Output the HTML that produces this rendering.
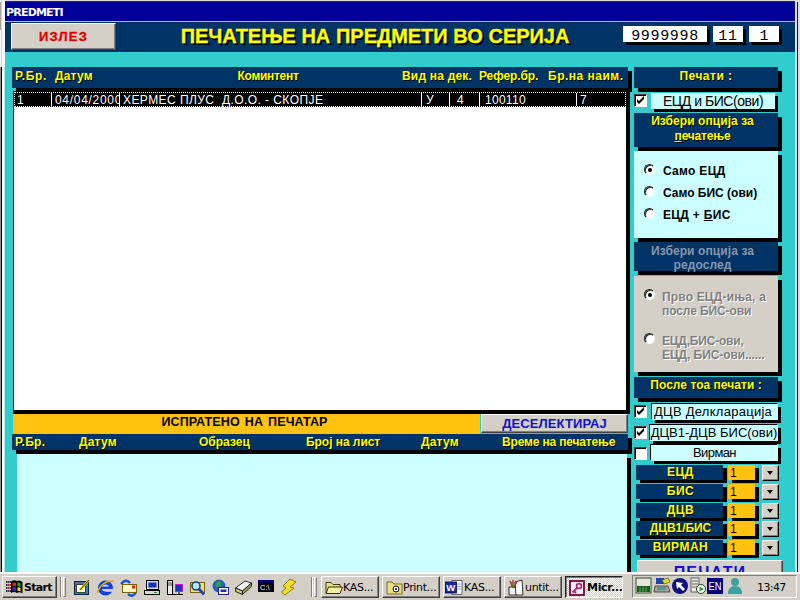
<!DOCTYPE html>
<html><head><meta charset="utf-8">
<style>
*{margin:0;padding:0;box-sizing:border-box}
html,body{width:800px;height:600px;overflow:hidden}
body{position:relative;background:#33cccc;font-family:"Liberation Sans",sans-serif;font-size:11px}
.a{position:absolute}
.navy{background:#003366;box-shadow:4px 4px 0 #000}
.y{color:#ffff00;font-weight:bold;font-size:12px;text-shadow:1px 1px 0 #000;white-space:nowrap;letter-spacing:0.5px}
.c{text-align:center}
.lc{background:#ccffff}
.btn{background:#d4d0c8;border:1px solid;border-color:#fff #404040 #404040 #fff;box-shadow:inset -1px -1px 0 #808080}
.sh{box-shadow:3px 3px 0 #000}
.cb{background:#fff;border:1px solid;border-color:#404040 #fff #fff #404040;box-shadow:inset 1px 1px 0 #000;width:13px;height:13px}
.cb svg{position:absolute;left:-1px;top:-1px}
.rd{width:11px;height:11px;border-radius:50%;background:#fff;border:1px solid;border-color:#202020 #f0f8f8 #f0f8f8 #202020;box-shadow:inset 1px 1px 0 #303030;transform:rotate(0deg)}
.rd i{position:absolute;left:2.5px;top:2.5px;width:4px;height:4px;border-radius:50%;background:#000}
.rt{font-weight:bold;font-size:12px;line-height:14px;color:#000;white-space:nowrap;letter-spacing:0.3px}
.dis{color:#808080;text-shadow:1px 1px 0 #fff}
.lb{font-size:13px;line-height:16px;box-shadow:3px 3px 0 #000,-1px -1px 0 #000;white-space:nowrap}
.cb b{position:absolute;left:1px;top:-2px;font-size:12px;line-height:13px;font-family:"DejaVu Sans",sans-serif}
.sm{width:87px;height:15px;font-size:12px;line-height:14px;padding-left:2px;box-shadow:4px 3px 0 #000}
.or{left:728px;width:27px;height:15px;background:#ffc20e;box-shadow:4px 3px 0 #000;font-size:12px;line-height:16px;padding-left:2px}
.dd{left:762px;width:17px;height:16px;border-color:#fff #000 #000 #fff}
.dd i{position:absolute;left:4px;top:5px;border:3.5px solid transparent;border-top:4px solid #000;border-bottom:0}
.tb{margin-top:1px;font-size:11px;line-height:14px;color:#000;white-space:nowrap;font-family:"DejaVu Sans","Liberation Sans",sans-serif;letter-spacing:-0.3px}
.grip{top:577px;width:3px;height:20px;background:#d4d0c8;border:1px solid;border-color:#fff #808080 #808080 #fff}
.row{color:#fff;font-size:12px;line-height:16px;white-space:nowrap;letter-spacing:0.28px}
.row span{overflow:hidden;height:15px;top:0}
</style></head><body>
<!-- frame -->
<div class="a" style="left:0;top:0;width:800px;height:2px;background:#dcdcd4"></div>
<div class="a" style="left:4px;top:1px;width:794px;height:1px;background:#303030"></div>
<div class="a" style="left:0;top:0;width:5px;height:67px;background:#fafaf8"></div>
<div class="a" style="left:0;top:2px;width:2px;height:28px;background:#a8a49c"></div>
<div class="a" style="left:1px;top:0;width:1px;height:67px;background:#d8d2cc"></div>
<div class="a" style="left:0;top:67px;width:1px;height:533px;background:#909088"></div>
<div class="a" style="left:1px;top:67px;width:1px;height:533px;background:#080808"></div>
<div class="a" style="left:2px;top:67px;width:2px;height:533px;background:#fcfcfc"></div>
<div class="a" style="left:4px;top:67px;width:1px;height:533px;background:#b0ecec"></div>
<div class="a" style="left:795px;top:0;width:5px;height:600px;background:#e0e0d8"></div>
<div class="a" style="left:795px;top:2px;width:2px;height:598px;background:#dce4f0"></div>
<div class="a" style="left:797px;top:2px;width:1px;height:598px;background:#181818"></div>
<!-- title bar -->
<div class="a" style="left:5px;top:2px;width:790px;height:19px;background:#000098"></div>
<div class="a" id="ttl" style="left:6px;top:6px;color:#fff;font-weight:bold;font-size:11px;line-height:13px;letter-spacing:-0.8px;font-family:'DejaVu Sans','Liberation Sans',sans-serif">PREDMETI</div>
<div class="a" style="left:5px;top:21px;width:790px;height:1px;background:#b0b8e0"></div>
<!-- header band -->
<div class="a" style="left:5px;top:22px;width:790px;height:30px;background:#003366"></div>
<div class="a btn c" style="left:11px;top:23px;width:105px;height:27px;color:#e00000;font-weight:bold;font-size:13px;line-height:25px;letter-spacing:1.2px;-webkit-text-stroke:0.3px #e00000" id="izl">ИЗЛЕЗ</div>
<div class="a y c" style="left:150px;top:24px;width:450px;font-size:20px;line-height:24px;text-shadow:2px 2px 0 #000;letter-spacing:-0.05px;word-spacing:0.3px;-webkit-text-stroke:0.3px #ffff00" id="big"><span>ПЕЧАТЕЊЕ НА ПРЕДМЕТИ ВО СЕРИЈА</span></div>
<div class="a sh c" style="left:623px;top:26px;width:84px;height:16px;background:#fff;font:15px/21px 'Liberation Mono',monospace;letter-spacing:0.65px">9999998</div>
<div class="a sh c" style="left:713px;top:26px;width:30px;height:16px;background:#fff;font:15px/21px 'Liberation Mono',monospace;letter-spacing:0.65px">11</div>
<div class="a sh c" style="left:749px;top:26px;width:30px;height:16px;background:#fff;font:15px/21px 'Liberation Mono',monospace">1</div>
<!-- main table header -->
<div class="a navy" style="left:12px;top:67px;width:616px;height:21px"></div>
<div class="a y" style="left:15px;top:69px;letter-spacing:0.65px">Р.Бр.</div>
<div class="a y" style="left:55px;top:69px;letter-spacing:0.2px">Датум</div>
<div class="a y" style="left:237.5px;top:69px;letter-spacing:-0.3px">Коминтент</div>
<div class="a y" style="left:402px;top:69px;letter-spacing:0.2px">Вид на дек.</div>
<div class="a y" style="left:479px;top:69px;letter-spacing:-0.1px">Рефер.бр.</div>
<div class="a y" style="left:548px;top:69px">Бр.на наим.</div>
<!-- list -->
<div class="a" style="left:13px;top:91px;width:617px;height:323px;background:#000"></div>
<div class="a" style="left:14px;top:92px;width:612px;height:318px;background:#fff"></div>
<div class="a" style="left:14px;top:92px;width:612px;height:15px;background:#000;outline:1px dotted #fff;outline-offset:-1px"></div>
<div class="a row" style="left:14px;top:92px;width:612px;height:15px">
<span class="a" style="left:3px;width:34px">1</span>
<span class="a" style="left:41px;width:64px;letter-spacing:0.7px">04/04/2000</span>
<span class="a" style="left:109px;width:290px;letter-spacing:0.43px">ХЕРМЕС ПЛУС&nbsp; Д.О.О. - СКОПЈЕ</span>
<span class="a" style="left:412px;width:20px">У</span>
<span class="a" style="left:443px;width:20px">4</span>
<span class="a" style="left:471px;width:80px">100110</span>
<span class="a" style="left:566px;width:40px">7</span>
<i class="a" style="left:37px;top:1px;width:1px;height:13px;background:#fff"></i>
<i class="a" style="left:105px;top:1px;width:1px;height:13px;background:#fff"></i>
<i class="a" style="left:407px;top:1px;width:1px;height:13px;background:#fff"></i>
<i class="a" style="left:435px;top:1px;width:1px;height:13px;background:#fff"></i>
<i class="a" style="left:465px;top:1px;width:1px;height:13px;background:#fff"></i>
<i class="a" style="left:562px;top:1px;width:1px;height:13px;background:#fff"></i>
</div>
<!-- orange bar -->
<div class="a c" style="left:13px;top:414px;width:467px;height:20px;background:#ffc20e;font-weight:bold;font-size:12.5px;line-height:16px;letter-spacing:0.1px;word-spacing:1.5px;padding-right:4px;color:#000">ИСПРАТЕНО НА ПЕЧАТАР</div>
<div class="a btn c" style="left:481px;top:414px;width:147px;height:19px;color:#1010d0;font-weight:bold;font-size:13px;line-height:17px;letter-spacing:0.1px">ДЕСЕЛЕКТИРАЈ</div>
<!-- second header -->
<div class="a navy" style="left:12px;top:434px;width:616px;height:16px"></div>
<div class="a y" style="left:15px;top:435px;letter-spacing:0.3px">Р.Бр.</div>
<div class="a y" style="left:79px;top:435px;letter-spacing:0.2px">Датум</div>
<div class="a y" style="left:199px;top:435px;letter-spacing:0">Образец</div>
<div class="a y" style="left:306px;top:435px;letter-spacing:-0.05px">Број на лист</div>
<div class="a y" style="left:421px;top:435px;letter-spacing:0.2px">Датум</div>
<div class="a y" style="left:502px;top:435px;letter-spacing:-0.16px">Време на печатење</div>
<div class="a lc" style="left:17px;top:454px;width:610px;height:121px;box-shadow:4px 4px 0 #000"></div>

<!-- right panel -->
<div class="a navy y c" style="left:634px;top:67px;width:144px;height:21px;line-height:18px">Печати :</div>
<div class="a cb" style="left:634px;top:94px"><svg width="13" height="13" viewBox="0 0 13 13"><path d="M3 5 L5 7 L10 2 V5 L5 10 L3 8 Z" fill="#000"/></svg></div>
<div class="a lc sh c" style="left:651px;top:93px;width:124px;height:16px;font-size:14px;line-height:17px;letter-spacing:-0.45px">ЕЦД и БИС(ови)</div>
<div class="a navy y c" style="left:634px;top:113px;width:144px;height:34px;line-height:15px;padding-top:1px;padding-right:7px;letter-spacing:0.07px">Избери опција за<br><span style="letter-spacing:-0.2px"><u>п</u>ечатење</span></div>
<div class="a lc" style="left:634px;top:151px;width:144px;height:87px;box-shadow:4px 4px 0 #000"></div>
<div class="a navy c" style="left:634px;top:242px;width:144px;height:29px;line-height:14px;padding-top:2px;padding-right:7px;font-size:12px;color:#8896ac;font-weight:bold;letter-spacing:0.1px">Избери опција за<br>редослед</div>
<div class="a" style="left:634px;top:276px;width:144px;height:96px;background:#d4d0c8;box-shadow:4px 4px 0 #000"></div>
<div class="a navy y c" style="left:634px;top:377px;width:144px;height:21px;line-height:17px;letter-spacing:0.03px">После тоа печати :</div>

<!-- radios -->
<div class="a rd" style="left:644px;top:164px"><i></i></div>
<div class="a rd" style="left:644px;top:186px"></div>
<div class="a rd" style="left:644px;top:208px"></div>
<div class="a rt" style="left:663px;top:164px">Само ЕЦД</div>
<div class="a rt" style="left:663px;top:186px;letter-spacing:0">Само БИС (ови)</div>
<div class="a rt" style="left:663px;top:208px">ЕЦД + <u>Б</u>ИС</div>
<div class="a rd" style="left:644px;top:289px"><i></i></div>
<div class="a rd" style="left:644px;top:333px"></div>
<div class="a rt dis" style="left:662px;top:290px"><span style="letter-spacing:0.17px">Прво ЕЦД-иња, а</span><br><span style="letter-spacing:-0.1px">после БИС-ови</span></div>
<div class="a rt dis" style="left:662px;top:334px"><span style="letter-spacing:-0.2px">ЕЦД,БИС-ови,</span><br><span style="letter-spacing:-0.08px">ЕЦД, БИС-ови......</span></div>
<!-- check rows -->
<div class="a cb" style="left:634px;top:405px"><svg width="13" height="13" viewBox="0 0 13 13"><path d="M3 5 L5 7 L10 2 V5 L5 10 L3 8 Z" fill="#000"/></svg></div>
<div class="a lc c lb" style="left:652px;top:404px;width:126px;height:16px;letter-spacing:0.27px;padding-right:4px">ДЦВ Делкларација</div>
<div class="a cb" style="left:634px;top:426px"><svg width="13" height="13" viewBox="0 0 13 13"><path d="M3 5 L5 7 L10 2 V5 L5 10 L3 8 Z" fill="#000"/></svg></div>
<div class="a lc c lb" style="left:650px;top:425px;width:128px;height:16px">ДЦВ1-ДЦВ БИС(ови)</div>
<div class="a cb" style="left:634px;top:447px"></div>
<div class="a lc c lb" style="left:651px;top:445px;width:127px;height:16px;letter-spacing:-0.6px">Вирман</div>
<!-- combos -->
<div class="a navy y c sm" style="left:636px;top:465px">ЕЦД</div><div class="a or" style="top:465px">1</div><div class="a btn dd" style="top:465px"><i></i></div>
<div class="a navy y c sm" style="left:636px;top:484px">БИС</div><div class="a or" style="top:484px">1</div><div class="a btn dd" style="top:484px"><i></i></div>
<div class="a navy y c sm" style="left:636px;top:503px">ДЦВ</div><div class="a or" style="top:503px">1</div><div class="a btn dd" style="top:503px"><i></i></div>
<div class="a navy y c sm" style="left:636px;top:521px;letter-spacing:-0.07px">ДЦВ1/БИС</div><div class="a or" style="top:521px">1</div><div class="a btn dd" style="top:521px"><i></i></div>
<div class="a navy y c sm" style="left:636px;top:540px">ВИРМАН</div><div class="a or" style="top:540px">1</div><div class="a btn dd" style="top:540px"><i></i></div>
<div class="a btn c" style="left:637px;top:560px;width:146px;height:24px;color:#1010d0;font-weight:bold;font-size:16px;line-height:23px;letter-spacing:1.2px">ПЕЧАТИ</div>
<!-- taskbar -->
<div class="a" style="left:0;top:572px;width:800px;height:28px;background:#d4d0c8;border-top:1px solid #fff"></div>
<div class="a" style="left:0;top:573px;width:800px;height:1px;background:#fff"></div>
<!-- start -->
<div class="a btn" style="left:2px;top:576px;width:55px;height:22px"></div>
<svg class="a" style="left:6px;top:580px" width="17" height="14" viewBox="0 0 17 14">
<path d="M0 2 H5 M0 5 H5 M0 8 H5 M0 11 H5" stroke="#000" stroke-width="1.6" stroke-dasharray="1.2 0.8"/>
<path d="M1 2 H4" stroke="#2040d0" stroke-width="1.2"/><path d="M1 5 H5" stroke="#e02020" stroke-width="1.4"/><path d="M1 8 H5" stroke="#e02020" stroke-width="1.2"/><path d="M1 11 H4" stroke="#2040d0" stroke-width="1.2"/>
<path d="M5 1.5 Q8 -0.5 11 1 Q13.5 -0.5 16.5 2 L16.5 13.5 Q13.5 11.5 11 13 Q8 11 5 13 Z" fill="#000"/>
<path d="M6.5 3 Q8.5 2 10 3 L10 6.5 Q8.5 5.5 6.5 6.5 Z" fill="#e02020"/>
<path d="M11.5 2.5 Q13 2 14.5 3.5 L14.5 7 Q13 6 11.5 6.5 Z" fill="#20b020"/>
<path d="M6.5 7.5 Q8.5 6.5 10 7.5 L10 11 Q8.5 10 6.5 11 Z" fill="#2030e0"/>
<path d="M11.5 7.5 Q13 7 14.5 8 L14.5 11.5 Q13 10.5 11.5 11 Z" fill="#f0e020"/>
</svg>
<div class="a tb" style="left:24px;top:580px;font-weight:bold;letter-spacing:-0.7px">Start</div>
<div class="a" style="left:60px;top:577px;width:1px;height:20px;background:#808080"></div><div class="a" style="left:61px;top:577px;width:1px;height:20px;background:#fff"></div><div class="a grip" style="left:63px"></div>
<!-- quick launch icons -->
<svg class="a" style="left:70px;top:577px" width="232" height="20" viewBox="0 0 232 20">
<g transform="translate(4,2)"><rect x="0.5" y="2.5" width="14" height="13" fill="#4078b8" stroke="#102040"/><rect x="2.5" y="5.5" width="9" height="8" fill="#fff" stroke="#404040"/><path d="M6 11 L15 1" stroke="#e0c000" stroke-width="2.6"/><path d="M6 11 L15 1" stroke="#000" stroke-width="0.6"/></g>
<g transform="translate(27,2)"><circle cx="8.5" cy="9" r="5.6" fill="none" stroke="#1040e0" stroke-width="4"/><rect x="9" y="9.8" width="8" height="3" fill="#d4d0c8"/><rect x="4" y="7.6" width="11" height="2.4" fill="#1040e0"/><path d="M0 14 Q5 1 17 2" stroke="#e0b000" stroke-width="1.6" fill="none"/></g>
<g transform="translate(50,2)"><path d="M1 5 Q6 -1 10 4 M8 15 Q13 19 16 13" stroke="#2050e0" stroke-width="2.6" fill="none"/><rect x="2.5" y="5.5" width="14" height="8" fill="#fff8c0" stroke="#806000"/><rect x="12" y="6.5" width="3" height="3" fill="#e02020"/></g>
<g transform="translate(74,2)"><rect x="2.5" y="1.5" width="12" height="9" fill="#d8d8d8" stroke="#000"/><rect x="4.5" y="3.5" width="8" height="5" fill="#1030c0"/><rect x="0.5" y="11.5" width="15" height="4" fill="#d8d8d8" stroke="#000"/><rect x="10" y="13" width="3" height="1" fill="#20a020"/></g>
<g transform="translate(96,2)"><rect x="1.5" y="1.5" width="5" height="14" fill="#e8e8e8" stroke="#000"/><path d="M2 4 H6 M2 6 H6" stroke="#000" stroke-width="0.7"/><rect x="9.5" y="5.5" width="7" height="7" fill="#2030c0" stroke="#c020c0"/><path d="M7 15.5 H17 M13 13 V15" stroke="#000"/></g>
<g transform="translate(119,2)"><rect x="1.5" y="3.5" width="14" height="10" fill="#f0e080" stroke="#806000"/><circle cx="7" cy="7" r="4" fill="#b0e8f8" stroke="#204080" stroke-width="1.6"/><path d="M10 10 L15 15.5" stroke="#2040c0" stroke-width="2.8"/></g>
<g transform="translate(142,2)"><circle cx="7" cy="7" r="6.5" fill="#2060c0"/><path d="M3 5 Q7 0 10 4 Q9 9 4 8 Z" fill="#30a040"/><rect x="6.5" y="8.5" width="10" height="7" fill="#fff" stroke="#202080"/><rect x="8.5" y="10.5" width="6" height="2.5" fill="#2030a0"/></g>
<g transform="translate(165,2)"><path d="M0.5 9 L10 2 L16.5 4 L7.5 12 Z" fill="#f4f4f4" stroke="#000" stroke-width="0.8"/><path d="M0.5 9 L7.5 12 L7.5 15.5 L0.5 12.5 Z" fill="#c8c880" stroke="#000" stroke-width="0.8"/><path d="M7.5 12 L16.5 4 L16.5 7.5 L7.5 15.5 Z" fill="#a0a060" stroke="#000" stroke-width="0.8"/></g>
<g transform="translate(188,2)"><rect x="0" y="1" width="16" height="12" fill="#000"/><rect x="0" y="1" width="16" height="2.5" fill="#000080"/><text x="2" y="11" font-size="7.5" fill="#fff" font-family="Liberation Sans,sans-serif">C:\</text></g>
<g transform="translate(211,1)"><path d="M9 1 L15 4 L9 9 L13 10 L4 17 L0.5 14 L5 10 L2 8 Z" fill="#f0e020" stroke="#806000" stroke-width="0.8"/></g>
</svg>
<div class="a" style="left:311px;top:577px;width:1px;height:20px;background:#808080"></div><div class="a" style="left:312px;top:577px;width:1px;height:20px;background:#fff"></div><div class="a grip" style="left:314px"></div>
<!-- task buttons -->
<div class="a btn" style="left:321px;top:576px;width:58px;height:22px"></div>
<div class="a btn" style="left:382px;top:576px;width:58px;height:22px"></div>
<div class="a btn" style="left:443px;top:576px;width:58px;height:22px"></div>
<div class="a btn" style="left:504px;top:576px;width:58px;height:22px"></div>
<div class="a" style="left:565px;top:576px;width:58px;height:22px;background:repeating-conic-gradient(#fff 0% 25%,#d4d0c8 0% 50%) 0 0/2px 2px;border:1px solid;border-color:#202020 #fff #fff #202020;box-shadow:inset 1px 1px 0 #808080"></div>
<svg class="a" style="left:325px;top:579px" width="300" height="17" viewBox="0 0 300 17">
<path d="M1 3.5 H6 L8 5.5 H15 V14 H1 Z" fill="#e8e080" stroke="#302800" stroke-width="0.9"/><path d="M3.5 8 H17.5 L15 14.5 H1 Z" fill="#f4f0a0" stroke="#201800" stroke-width="0.9"/>
<path d="M62 3 H67 L69 5 H77 V15 H62 Z" fill="#e8e080" stroke="#605000" stroke-width="0.8"/><circle cx="71" cy="10" r="3" fill="#fff" stroke="#000"/><circle cx="71" cy="10" r="1" fill="#000"/>
<rect x="127" y="1.5" width="10" height="14" fill="#fff" stroke="#404060" stroke-width="0.8"/><path d="M132 5 H136 M132 7.5 H136 M132 10 H136" stroke="#8090c0" stroke-width="0.8"/><rect x="120.5" y="3" width="11" height="11" fill="#1828a0" stroke="#000060" stroke-width="0.8"/><text x="121.3" y="12" font-size="9.5" font-weight="bold" fill="#fff" font-family="Liberation Sans,sans-serif">W</text>
<path d="M184 8 H192 V16 H184 Z" fill="#f0f0f0" stroke="#000" stroke-width="0.8"/><path d="M190 3 L197 1 L198 16 H191 Z" fill="#fff" stroke="#000" stroke-width="0.8"/><path d="M185 2 L188 9 M188 1 L188 9 M192 2 L189 9" stroke="#c02020" stroke-width="1.4"/><path d="M186 3 L188 9" stroke="#20a020" stroke-width="1.2"/>
<rect x="245" y="2" width="14" height="14" fill="#fff0f8" stroke="#780038" stroke-width="1.8"/><circle cx="254" cy="7" r="2.4" fill="none" stroke="#b02870" stroke-width="1.8"/><path d="M252.5 8.5 L247.5 13.5 M249 12 L251 14" stroke="#b02870" stroke-width="1.8"/>
</svg>
<div class="a tb" style="left:343px;top:580px">KAS...</div>
<div class="a tb" style="left:403px;top:580px">Print...</div>
<div class="a tb" style="left:464px;top:580px">KAS...</div>
<div class="a tb" style="left:525px;top:580px">untit...</div>
<div class="a tb" style="left:587px;top:580px;font-weight:bold">Micr...</div>
<!-- tray -->
<div class="a" style="left:632px;top:575px;width:165px;height:23px;border:1px solid;border-color:#808080 #fff #fff #808080"></div>
<svg class="a" style="left:635px;top:577px" width="110" height="19" viewBox="0 0 110 19">
<rect x="1" y="1" width="15" height="15" fill="#e4e8dc" stroke="#305030"/><rect x="2" y="9" width="13" height="6" fill="#106010"/><path d="M5 10 V15 M8 10 V15 M11 10 V15" stroke="#80c080" stroke-width="0.8"/>
<rect x="21" y="1" width="8" height="6" fill="#2040c0"/><path d="M27 3 L33 1 L35 5 L29 7 Z" fill="#e0e020" stroke="#404000" stroke-width="0.6"/><path d="M20 9 H33 L35 15 H19 Z" fill="#a0a890" stroke="#303030" stroke-width="0.8"/><rect x="22" y="10" width="9" height="3" fill="#40a0a0"/>
<circle cx="45" cy="9" r="8" fill="#101080"/><path d="M41 5 L48 6 L46 8 L50 12 L48 14 L44 10 L42 12 Z" fill="#fff"/>
<rect x="56" y="1" width="8" height="14" fill="#e8e8e8" stroke="#404040" stroke-width="0.8"/><path d="M57 4 H63 M57 7 H63 M57 10 H63" stroke="#404040" stroke-width="0.8"/><circle cx="66" cy="12" r="4.5" fill="#fff" stroke="#204020"/><path d="M64.5 9.5 L69 12 L64.5 14.5 Z" fill="#20a020"/>
<rect x="72" y="1" width="16" height="16" fill="#000080"/><text x="73.5" y="13" font-size="10.5" textLength="13" lengthAdjust="spacingAndGlyphs" fill="#fff" font-family="Liberation Sans,sans-serif">EN</text>
<circle cx="100" cy="5" r="4" fill="#40a0a0"/><path d="M93 17 Q93 9 100 9 Q107 9 107 17 Z" fill="#40a0a0"/>
</svg>
<div class="a tb" style="left:757px;top:580px;letter-spacing:-0.6px">13:47</div>
</body></html>
